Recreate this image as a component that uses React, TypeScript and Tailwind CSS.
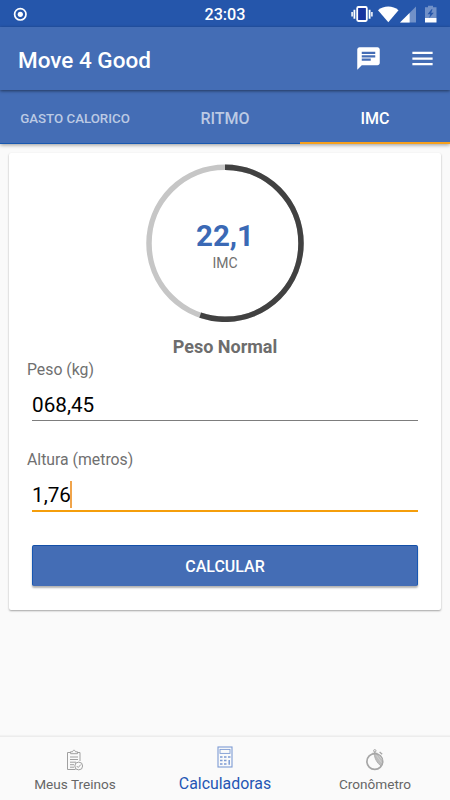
import React, { useState } from 'react';
import { MdChat, MdMenu } from 'react-icons/md';

const RecordIcon = () => (
  <svg className="h-[14px] w-[14px]" viewBox="0 0 14 14" fill="none">
    <circle cx="7.300" cy="7.300" r="5.700" stroke="white" strokeWidth="1.700" />
    <circle cx="7.300" cy="7.300" r="2.600" fill="white" />
  </svg>
);

const StatusIcons = () => (
  <svg className="h-[18px] w-[88px]" viewBox="0 0 88 18">
    {/* vibrate */}
    <rect x="6.2" y="2" width="9.6" height="14" rx="1.2" fill="#1733a0" stroke="white" strokeWidth="1.8" />
    <path d="M3.4 4.800v9M18.600 4.800v9" stroke="white" strokeWidth="1.800" />
    <path d="M1.1 7v4.6M20.900 7v4.600" stroke="white" strokeWidth="1.500" />
    {/* wifi */}
    <path d="M27 5.200C32.500 .400 42 .400 47.500 5.200L37.300 17.300z" fill="white" />
    {/* signal */}
    <path d="M65 1.500V17.500H49z" fill="white" fillOpacity="0.35" />
    <path d="M58.600 7.900V17.500H49z" fill="white" />
    {/* battery */}
    <path d="M77 .800h5v1.500h3.500V13H74V2.300h3z" fill="white" fillOpacity="0.35" />
    <path d="M74 13h11.500v4.500H74z" fill="white" />
    <path d="M80.500 4.300L76.600 9.300h2.600L78.200 13l4.600-5.300h-2.600l1.300-3.400z" fill="#2556ab" />
  </svg>
);

const ClipboardIcon = () => (
  <svg className="h-[22px] w-[18px]" viewBox="0 0 18 22" fill="none" stroke="#a0a0a0" strokeWidth="1">
    <path d="M4.500 3.500H1.500v17h8M11 3.500H14v8.500" />
    <path d="M4.500 4.500V2.800h2C6.500 .800 9.500 .800 9.500 2.800h2v1.900H4.500z" />
    <path d="M4 8h8M4 10.500h8M4 13.200h6M4 15.700h4M4 18.200h4" />
    <circle cx="12.700" cy="17" r="3.900" fill="#fafafa" />
    <path d="M10.700 17l1.500 1.500 2.700-3" />
  </svg>
);

const CalculatorIcon = () => (
  <svg className="h-[22px] w-[16px]" viewBox="0 0 16 22" fill="none" stroke="#7d9bd3">
    <rect x="1" y="1" width="14" height="20" strokeWidth="1.100" />
    <rect x="3" y="3.400" width="10" height="4" strokeWidth="0.900" />
    <path d="M3 11h2.500M7 11h2.500M11 11h2.500M3 14.500h2.500M7 14.500h2.500M3 18h2.500M7 18h2.500" strokeWidth="1.500" />
    <path d="M12.200 14v4.800" strokeWidth="1.500" />
  </svg>
);

const StopwatchIcon = () => (
  <svg className="h-[22px] w-[20px]" viewBox="0 0 20 22" fill="none" stroke="#a6a6a6">
    <circle cx="9.800" cy="12.500" r="7.900" strokeWidth="1.700" />
    <path d="M9.300 4.700C9.300 9 12 14 16 17C19 12.500 18 6 9.300 4.700z" fill="#bdbdbd" strokeWidth="0.800" />
    <path d="M9.800 2.500v2.500M7.400 4.300h5M14.600 3.100l2.600 2.200" strokeWidth="1.300" />
    <circle cx="9.800" cy="1.800" r="1.200" strokeWidth="1" />
    <path d="M11.500 6.500l5 7M14 6.500l3 4" stroke="#dedede" strokeWidth="0.600" />
  </svg>
);

const Header = () => {
  return (
    <div>
      <div className="grid h-[27px] grid-cols-3 items-center bg-[#2556ab] text-white">
        <div className="pl-[13px]"><RecordIcon /></div>
        <p className="pt-[2px] text-center text-[16.200px] leading-5 font-medium">23:03</p>
        <div className="flex justify-end pr-[11px]"><StatusIcons /></div>
      </div>
      <div className="relative flex h-[63px] items-center bg-[#446db5] pr-[14px] pl-[18px] text-white shadow-[0_1px_3px_rgba(0,0,0,0.5)]">
        <h1 className="grow pt-[4px] text-[22.500px] font-medium">Move 4 Good</h1>
        <MdChat className="mr-[27px] h-[27px] w-[27px]" />
        <MdMenu className="h-[27px] w-[27px]" />
      </div>
    </div>
  );
}

const tabs = [
  { name: 'GASTO CALORICO', size: 'text-[13.300px]' },
  { name: 'RITMO', size: 'text-[16px]' },
  { name: 'IMC', size: 'text-[16px]' },
];

const TabBar = () => {
  const [active, setActive] = useState('IMC');
  return (
    <div className="grid h-[54px] grid-cols-3 bg-[#446db5] font-medium shadow-[0_1px_4px_rgba(0,0,0,0.4)]">
      {tabs.map((tab) => (
        <button
          key={tab.name}
          onClick={() => setActive(tab.name)}
          className={`${tab.size} ${active === tab.name ? 'border-b-2 border-[#f5a01d] pt-[5px] text-white' : 'border-b border-[#1858b0] pt-[4px] text-[#bccae4]'}`}
        >
          {tab.name}
        </button>
      ))}
    </div>
  );
}

const Gauge = () => (
  <div className="grid h-[158px] w-[158px] place-items-center">
    <svg className="col-start-1 row-start-1 h-[158px] w-[158px]" viewBox="0 0 158 158" fill="none" strokeWidth="5.500">
      <circle cx="79" cy="79.300" r="76" stroke="#c6c6c6" />
      <circle cx="79" cy="79.300" r="76" stroke="#414141" pathLength="100" strokeDasharray="55.300 44.700" transform="rotate(-90 79 79.300)" />
    </svg>
    <div className="col-start-1 row-start-1 pt-[5px] text-center">
      <p className="text-[29.500px] leading-[34px] font-bold text-[#3b69b5]">22,1</p>
      <p className="text-[14px] leading-5 text-[#707070]">IMC</p>
    </div>
  </div>
);

const Calculator = () => (
  <div className="mx-[9px] mt-[9px] flex h-[457px] flex-col rounded-[2px] bg-white px-[18px] pt-[11px] shadow-[0_1px_2px_rgba(0,0,0,0.35)]">
    <div className="flex flex-col items-center">
      <Gauge />
      <p className="mt-[13px] text-[18px] leading-6 font-bold text-[#6d6d6d]">Peso Normal</p>
    </div>
    <p className="text-[15.800px] leading-[22px] text-[#707070]">Peso (kg)</p>
    <div className="mx-[5px] mt-[8px] flex h-[32px] items-center border-b border-[#7d7d7d] pt-[3px] text-[20.700px] text-black">068,45</div>
    <p className="mt-[28px] text-[15.800px] leading-[22px] text-[#707070]">Altura (metros)</p>
    <div className="mx-[5px] mt-[8px] flex h-[33px] items-center border-b-2 border-[#f59e0b] pt-[3px] text-[20.700px] text-black">
      1,76
      <span className="-mt-[4px] -ml-px h-[27px] w-[2px] bg-[#f0a44b]"></span>
    </div>
    <button className="mx-[5px] mt-[33px] h-[41px] rounded-[2px] border border-x-[#1757b2] border-t-[#1450a8] border-b-[#446db5] bg-[#446db5] pt-[3px] text-[16px] font-medium text-white shadow-[0_2px_2px_rgba(0,0,0,0.3)]">
      CALCULAR
    </button>
  </div>
);

const BottomNav = () => (
  <div className="grid h-[64px] grid-cols-3 border-t border-[#ececec] text-[13.600px] text-[#666666] shadow-[0_-1px_1px_rgba(0,0,0,0.03)]">
    <div className="flex flex-col items-center pt-[12px]">
      <ClipboardIcon />
      <p className="mt-[3px] leading-5">Meus Treinos</p>
    </div>
    <div className="flex flex-col items-center pt-[9px] text-[#2556b4]">
      <CalculatorIcon />
      <p className="mt-[6px] text-[15.900px] leading-5">Calculadoras</p>
    </div>
    <div className="flex flex-col items-center pt-[12px]">
      <StopwatchIcon />
      <p className="mt-[3px] leading-5">Cronômetro</p>
    </div>
  </div>
);

const App = () => {
  return (
    <div className="flex h-[800px] w-[450px] flex-col overflow-hidden bg-[#fafafa] font-['Roboto',sans-serif]">
      <Header />
      <TabBar />
      <Calculator />
      <div className="grow" />
      <BottomNav />
    </div>
  );
}

export default App
